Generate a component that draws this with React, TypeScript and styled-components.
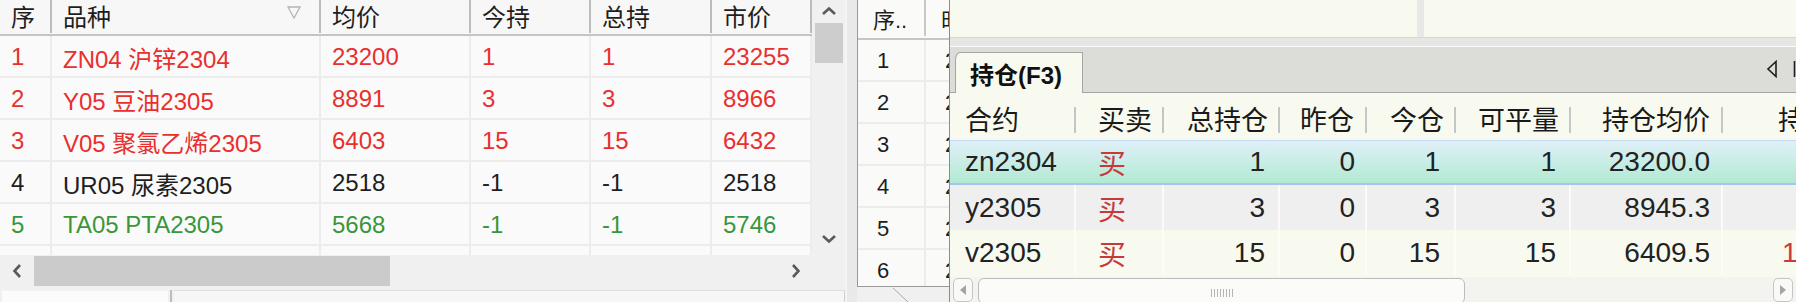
import styled, { createGlobalStyle } from "styled-components";

const FONT = `"Liberation Sans", "Noto Sans CJK SC", sans-serif`;

const GlobalStyle = createGlobalStyle`
  html, body {
    margin: 0;
    padding: 0;
  }
  body {
    background: #f0f0f0;
    font-family: ${FONT};
  }
`;

type Tone = "up" | "down" | "flat";

const toneColor: Record<Tone, string> = {
  up: "#e8302e",
  down: "#3a963a",
  flat: "#1e1e1e",
};

interface Quote {
  no: string;
  name: string;
  avg: string;
  today: string;
  total: string;
  last: string;
  tone: Tone;
}

const quotes: Quote[] = [
  { no: "1", name: "ZN04 沪锌2304", avg: "23200", today: "1", total: "1", last: "23255", tone: "up" },
  { no: "2", name: "Y05 豆油2305", avg: "8891", today: "3", total: "3", last: "8966", tone: "up" },
  { no: "3", name: "V05 聚氯乙烯2305", avg: "6403", today: "15", total: "15", last: "6432", tone: "up" },
  { no: "4", name: "UR05 尿素2305", avg: "2518", today: "-1", total: "-1", last: "2518", tone: "flat" },
  { no: "5", name: "TA05 PTA2305", avg: "5668", today: "-1", total: "-1", last: "5746", tone: "down" },
];

const QUOTE_TEMPLATE = "52px 269px 150px 120px 121px 100px";

interface PosColumn {
  title: string;
  width: number;
  headPad: number;
  align: "left" | "right";
  pad: number;
}

const posColumns: PosColumn[] = [
  { title: "合约", width: 126, headPad: 15, align: "left", pad: 15 },
  { title: "买卖", width: 88, headPad: 22, align: "left", pad: 22 },
  { title: "总持仓", width: 116, headPad: 23, align: "right", pad: 13 },
  { title: "昨仓", width: 87, headPad: 20, align: "right", pad: 10 },
  { title: "今仓", width: 89, headPad: 23, align: "right", pad: 14 },
  { title: "可平量", width: 115, headPad: 22, align: "right", pad: 13 },
  { title: "持仓均价", width: 152, headPad: 31, align: "right", pad: 11 },
  { title: "持仓盈亏", width: 160, headPad: 55, align: "left", pad: 59 },
];

const POS_TEMPLATE = posColumns.map((c) => `${c.width}px`).join(" ");

type RowKind = "selected" | "grey" | "cream";

interface Position {
  cells: string[];
  kind: RowKind;
}

const positions: Position[] = [
  { cells: ["zn2304", "买", "1", "0", "1", "1", "23200.0", ""], kind: "selected" },
  { cells: ["y2305", "买", "3", "0", "3", "3", "8945.3", ""], kind: "grey" },
  { cells: ["v2305", "买", "15", "0", "15", "15", "6409.5", "1 155.0"], kind: "cream" },
];

const redColumns = [1, 7];

function App(): JSX.Element {
  return (
    <>
      <GlobalStyle />
      <Screen>
        <QuotePane>
          <QuoteMain>
            <QuoteGrid>
              <QuoteHead>
                <QuoteHeadCell>序</QuoteHeadCell>
                <QuoteHeadCell>
                  品种
                  <SortMark width="14" height="13" viewBox="0 0 14 13">
                    <polygon points="1,1 13,1 7,12" fill="none" stroke="#b4b4b4" strokeWidth="1.3" />
                  </SortMark>
                </QuoteHeadCell>
                <QuoteHeadCell>均价</QuoteHeadCell>
                <QuoteHeadCell>今持</QuoteHeadCell>
                <QuoteHeadCell>总持</QuoteHeadCell>
                <QuoteHeadCell>市价</QuoteHeadCell>
              </QuoteHead>
              {quotes.map((q) => (
                <QuoteRow key={q.no} $tone={q.tone}>
                  <QuoteCell>{q.no}</QuoteCell>
                  <QuoteCell>{q.name}</QuoteCell>
                  <QuoteCell>{q.avg}</QuoteCell>
                  <QuoteCell>{q.today}</QuoteCell>
                  <QuoteCell>{q.total}</QuoteCell>
                  <QuoteCell>{q.last}</QuoteCell>
                </QuoteRow>
              ))}
              <QuoteRow $tone="flat">
                {Array.from({ length: 6 }).map((_, i) => (
                  <QuoteCell key={i} />
                ))}
              </QuoteRow>
            </QuoteGrid>
            <VScroll>
              <ScrollButton $size={22}>
                <Chevron width="16" height="10" viewBox="0 0 16 10">
                  <polyline points="2,8 8,2.5 14,8" />
                </Chevron>
              </ScrollButton>
              <VThumb />
              <Filler />
              <ScrollButton $size={33}>
                <Chevron width="16" height="10" viewBox="0 0 16 10">
                  <polyline points="2,2 8,7.5 14,2" />
                </Chevron>
              </ScrollButton>
            </VScroll>
          </QuoteMain>
          <HScroll>
            <ScrollButton $size={34}>
              <Chevron width="10" height="16" viewBox="0 0 10 16">
                <polyline points="8,2 2.5,8 8,14" />
              </Chevron>
            </ScrollButton>
            <HThumb />
            <Filler />
            <ScrollButton $size={32}>
              <Chevron width="10" height="16" viewBox="0 0 10 16">
                <polyline points="2,2 7.5,8 2,14" />
              </Chevron>
            </ScrollButton>
            <ScrollCorner />
          </HScroll>
          <StatusStrip>
            <StatusCell $width={166} $light />
            <StatusDivider />
            <StatusCell />
          </StatusStrip>
        </QuotePane>

        <Splitter />

        <QueuePane>
          <QueueBox>
            <QueueHead>
              <QueueHeadCell>序..</QueueHeadCell>
              <QueueHeadCell>时间</QueueHeadCell>
            </QueueHead>
            {["1", "2", "3", "4", "5", "6"].map((n) => (
              <QueueRow key={n}>
                <QueueCell>{n}</QueueCell>
                <QueueCell>23</QueueCell>
              </QueueRow>
            ))}
          </QueueBox>
          <QueueFoot width="92" height="15" viewBox="0 0 92 15">
            <line x1="36" y1="1" x2="51" y2="15" stroke="#a8a8a8" strokeWidth="1" />
          </QueueFoot>
        </QueuePane>

        <PositionWindow>
          <TopBoxes>
            <TopBox $width={467} />
            <TopGap />
            <TopBox />
          </TopBoxes>
          <TopBand />
          <TabStrip>
            <Tab>持仓(F3)</Tab>
            <Filler />
            <TabArrows width="30" height="18" viewBox="0 0 30 18">
              <polygon points="10,1.5 2,9 10,16.5" fill="none" stroke="#1e1e1e" strokeWidth="1.6" />
              <line x1="28.5" y1="1" x2="28.5" y2="17" stroke="#1e1e1e" strokeWidth="1.6" />
            </TabArrows>
          </TabStrip>
          <PosHead>
            {posColumns.map((c, i) => (
              <PosHeadCell key={c.title} $pad={c.headPad} $sep={i < posColumns.length - 1}>
                {c.title}
              </PosHeadCell>
            ))}
          </PosHead>
          {positions.map((p) => (
            <PosRow key={p.cells[0]} $kind={p.kind}>
              {p.cells.map((v, i) => (
                <PosCell
                  key={i}
                  $align={posColumns[i].align}
                  $pad={posColumns[i].pad}
                  $red={redColumns.includes(i)}
                  $kind={p.kind}
                >
                  {v}
                </PosCell>
              ))}
            </PosRow>
          ))}
          <PosScroll>
            <PosScrollButton>
              <svg width="10" height="12" viewBox="0 0 10 12">
                <polygon points="8,1 2,6 8,11" fill="#a4a4a4" />
              </svg>
            </PosScrollButton>
            <PosThumb>
              <Grip />
            </PosThumb>
            <Filler />
            <PosScrollButton>
              <svg width="10" height="12" viewBox="0 0 10 12">
                <polygon points="2,1 8,6 2,11" fill="#a4a4a4" />
              </svg>
            </PosScrollButton>
          </PosScroll>
        </PositionWindow>
      </Screen>
    </>
  );
}

const Screen = styled.div`
  display: flex;
  width: 1796px;
  height: 302px;
  overflow: hidden;
  background: #f0f0f0;
`;

const Filler = styled.div`
  flex: 1;
`;

/* ---------- left quote table ---------- */

const QuotePane = styled.section`
  width: 845px;
  flex: none;
  display: flex;
  flex-direction: column;
`;

const QuoteMain = styled.div`
  display: flex;
  height: 255px;
`;

const QuoteGrid = styled.div`
  width: 812px;
  overflow: hidden;
  background: #fafafa;
  border-bottom-right-radius: 4px;
  font-size: 24px;
`;

const QuoteHead = styled.div`
  display: grid;
  grid-template-columns: ${QUOTE_TEMPLATE};
  height: 36px;
  box-sizing: border-box;
  border-bottom: 2px solid #c4c4c4;
  background: #f7f7f7;
  color: #1e1e1e;
`;

const QuoteHeadCell = styled.div`
  display: flex;
  align-items: center;
  justify-content: space-between;
  box-sizing: border-box;
  height: 33px;
  padding: 0 18px 2px 11px;
  border-right: 2px solid #bcbcbc;
  white-space: nowrap;
`;

const SortMark = styled.svg`
  flex: none;
  margin-bottom: 6px;
`;

const QuoteRow = styled.div<{ $tone: Tone }>`
  display: grid;
  grid-template-columns: ${QUOTE_TEMPLATE};
  height: 42px;
  box-sizing: border-box;
  border-bottom: 2px solid #ececec;
  color: ${(p) => toneColor[p.$tone]};
`;

const QuoteCell = styled.div`
  display: flex;
  align-items: center;
  padding: 2px 11px 0;
  box-sizing: border-box;
  border-right: 2px solid #ececec;
  white-space: nowrap;
  overflow: hidden;
`;

const VScroll = styled.div`
  width: 33px;
  display: flex;
  flex-direction: column;
  align-items: center;
  background: #f0f0f0;
`;

const ScrollButton = styled.div<{ $size: number }>`
  flex: none;
  display: flex;
  align-items: center;
  justify-content: center;
  min-width: ${(p) => p.$size}px;
  min-height: ${(p) => p.$size}px;
`;

const Chevron = styled.svg`
  fill: none;
  stroke: #5a5a5a;
  stroke-width: 2.6;
`;

const VThumb = styled.div`
  width: 28px;
  height: 40px;
  margin-top: 1px;
  background: #cdcdcd;
`;

const HScroll = styled.div`
  display: flex;
  align-items: center;
  height: 32px;
  background: #f0f0f0;
`;

const HThumb = styled.div`
  width: 356px;
  height: 30px;
  background: #cbcbcb;
`;

const ScrollCorner = styled.div`
  width: 33px;
  height: 32px;
`;

const StatusStrip = styled.div`
  display: flex;
  height: 15px;
  padding-top: 3px;
  box-sizing: border-box;
`;

const StatusCell = styled.div<{ $width?: number; $light?: boolean }>`
  ${(p) => (p.$width ? `width: ${p.$width}px;` : "flex: 1;")}
  margin-left: ${(p) => (p.$light ? "2px" : "0")};
  background: ${(p) => (p.$light ? "#fbfbfb" : "#f6f6f6")};
  border-top: 1px solid ${(p) => (p.$light ? "#f4f4f4" : "#dedede")};
  border-right: ${(p) => (p.$light ? "none" : "1px solid #cfcfcf")};
`;

const StatusDivider = styled.div`
  width: 2px;
  margin: 0 2px;
  background: #bdbdbd;
`;

const Splitter = styled.div`
  width: 12px;
  flex: none;
  background: #e9e9e9;
  border-left: 2px solid #f5f5f5;
  box-sizing: border-box;
`;

/* ---------- middle queue table ---------- */

const QueuePane = styled.section`
  width: 92px;
  flex: none;
  display: flex;
  flex-direction: column;
`;

const QueueBox = styled.div`
  height: 288px;
  box-sizing: border-box;
  border-left: 1px solid #9a9a9a;
  border-bottom: 1px solid #9a9a9a;
  background: #fafbf8;
  overflow: hidden;
  font-size: 22px;
  color: #1e1e1e;
`;

const QueueHead = styled.div`
  display: grid;
  grid-template-columns: 68px 60px;
  height: 40px;
  box-sizing: border-box;
  border-bottom: 2px solid #c6c6c6;
`;

const QueueHeadCell = styled.div`
  display: flex;
  align-items: center;
  padding: 0 0 0 15px;
  height: 36px;
  border-right: 2px solid #c8c8c8;
  white-space: nowrap;
  overflow: hidden;
`;

const QueueRow = styled.div`
  display: grid;
  grid-template-columns: 68px 60px;
  height: 42px;
  box-sizing: border-box;
  border-bottom: 2px solid #ececec;
`;

const QueueCell = styled.div`
  display: flex;
  align-items: center;
  padding: 2px 0 0 19px;
  border-right: 2px solid #ececec;
  white-space: nowrap;
  overflow: hidden;
`;

const QueueFoot = styled.svg`
  display: block;
`;

/* ---------- position window ---------- */

const PositionWindow = styled.section`
  width: 847px;
  flex: none;
  display: flex;
  flex-direction: column;
  box-sizing: border-box;
  border-left: 1px solid #8c8c8c;
  background: #f8faf0;
  overflow: hidden;
  font-size: 28px;
  color: #222;
`;

const TopBoxes = styled.div`
  display: flex;
  height: 38px;
  flex: none;
  box-sizing: border-box;
  border-bottom: 1px solid #d6d6d2;
`;

const TopBox = styled.div<{ $width?: number }>`
  ${(p) => (p.$width ? `width: ${p.$width}px;` : "flex: 1;")}
  background: #f8faf0;
`;

const TopGap = styled.div`
  width: 7px;
  background: #e8e8e6;
`;

const TopBand = styled.div`
  height: 9px;
  flex: none;
  box-sizing: border-box;
  background: #e6e6e4;
  border-bottom: 1px solid #fbfbfb;
`;

const TabStrip = styled.div`
  display: flex;
  align-items: flex-end;
  height: 46px;
  flex: none;
  box-sizing: border-box;
  padding-left: 5px;
  background: #dcdcd8;
  border-bottom: 1px solid #a4a4a4;
`;

const Tab = styled.div`
  width: 128px;
  height: 41px;
  box-sizing: border-box;
  display: flex;
  align-items: center;
  justify-content: center;
  background: #f8faf0;
  border: 1px solid #a4a4a4;
  border-bottom: none;
  border-top-left-radius: 5px 8px;
  font-size: 24px;
  font-weight: bold;
  color: #111;
  white-space: nowrap;
  margin-bottom: -1px;
  padding-right: 6px;
`;

const TabArrows = styled.svg`
  flex: none;
  align-self: center;
  margin-bottom: 2px;
`;

const PosHead = styled.div`
  display: grid;
  grid-template-columns: ${POS_TEMPLATE};
  height: 47px;
  flex: none;
  background: #f8faf0;
  font-size: 27px;
  color: #1a1a1a;
`;

const PosHeadCell = styled.div<{ $pad: number; $sep: boolean }>`
  position: relative;
  display: flex;
  align-items: center;
  padding: 3px 0 0 ${(p) => p.$pad}px;
  white-space: nowrap;
  overflow: hidden;

  &::after {
    content: "";
    display: ${(p) => (p.$sep ? "block" : "none")};
    position: absolute;
    right: 0;
    top: 14px;
    width: 2px;
    height: 26px;
    background: #c6c6c6;
  }
`;

const rowBackground: Record<RowKind, string> = {
  selected: "linear-gradient(to bottom, #e0eff8 0%, #c6ede4 55%, #b1e9d3 100%)",
  grey: "#efefef",
  cream: "#f8faf0",
};

const PosRow = styled.div<{ $kind: RowKind }>`
  display: grid;
  grid-template-columns: ${POS_TEMPLATE};
  height: 45px;
  flex: none;
  box-sizing: border-box;
  background: ${(p) => rowBackground[p.$kind]};
  ${(p) =>
    p.$kind === "selected"
      ? "border-top: 1px solid #c4dcf2; border-bottom: 2px solid #a6c4ee;"
      : ""}
`;

const PosCell = styled.div<{ $align: "left" | "right"; $pad: number; $red: boolean; $kind: RowKind }>`
  display: flex;
  align-items: center;
  justify-content: ${(p) => (p.$align === "right" ? "flex-end" : "flex-start")};
  padding: 0 ${(p) => (p.$align === "right" ? p.$pad : 0)}px 0
    ${(p) => (p.$align === "left" ? p.$pad : 0)}px;
  border-right: 2px solid
    ${(p) => (p.$kind === "grey" ? "#fafafa" : p.$kind === "cream" ? "#fcfdf9" : "transparent")};
  color: ${(p) => (p.$red ? "#c83a3a" : "#222")};
  white-space: pre;
  overflow: hidden;
`;

const PosScroll = styled.div`
  display: flex;
  align-items: flex-start;
  height: 25px;
  flex: none;
  margin-top: 2px;
  padding: 1px 3px 0 3px;
  box-sizing: border-box;
  background: #f3f4ef;
`;

const PosScrollButton = styled.div`
  width: 20px;
  height: 24px;
  box-sizing: border-box;
  display: flex;
  align-items: center;
  justify-content: center;
  border: 1px solid #c6c6c6;
  border-radius: 5px;
  background: #f9f9f7;
`;

const PosThumb = styled.div`
  width: 487px;
  height: 26px;
  margin-left: 5px;
  box-sizing: border-box;
  display: flex;
  align-items: center;
  justify-content: center;
  border: 1px solid #bdbdbd;
  border-radius: 6px;
  background: #fbfbf9;
`;

const Grip = styled.div`
  width: 22px;
  height: 8px;
  margin-top: 4px;
  background: repeating-linear-gradient(
    to right,
    #b4b4b4 0,
    #b4b4b4 1px,
    transparent 1px,
    transparent 3px
  );
`;

export default App;
